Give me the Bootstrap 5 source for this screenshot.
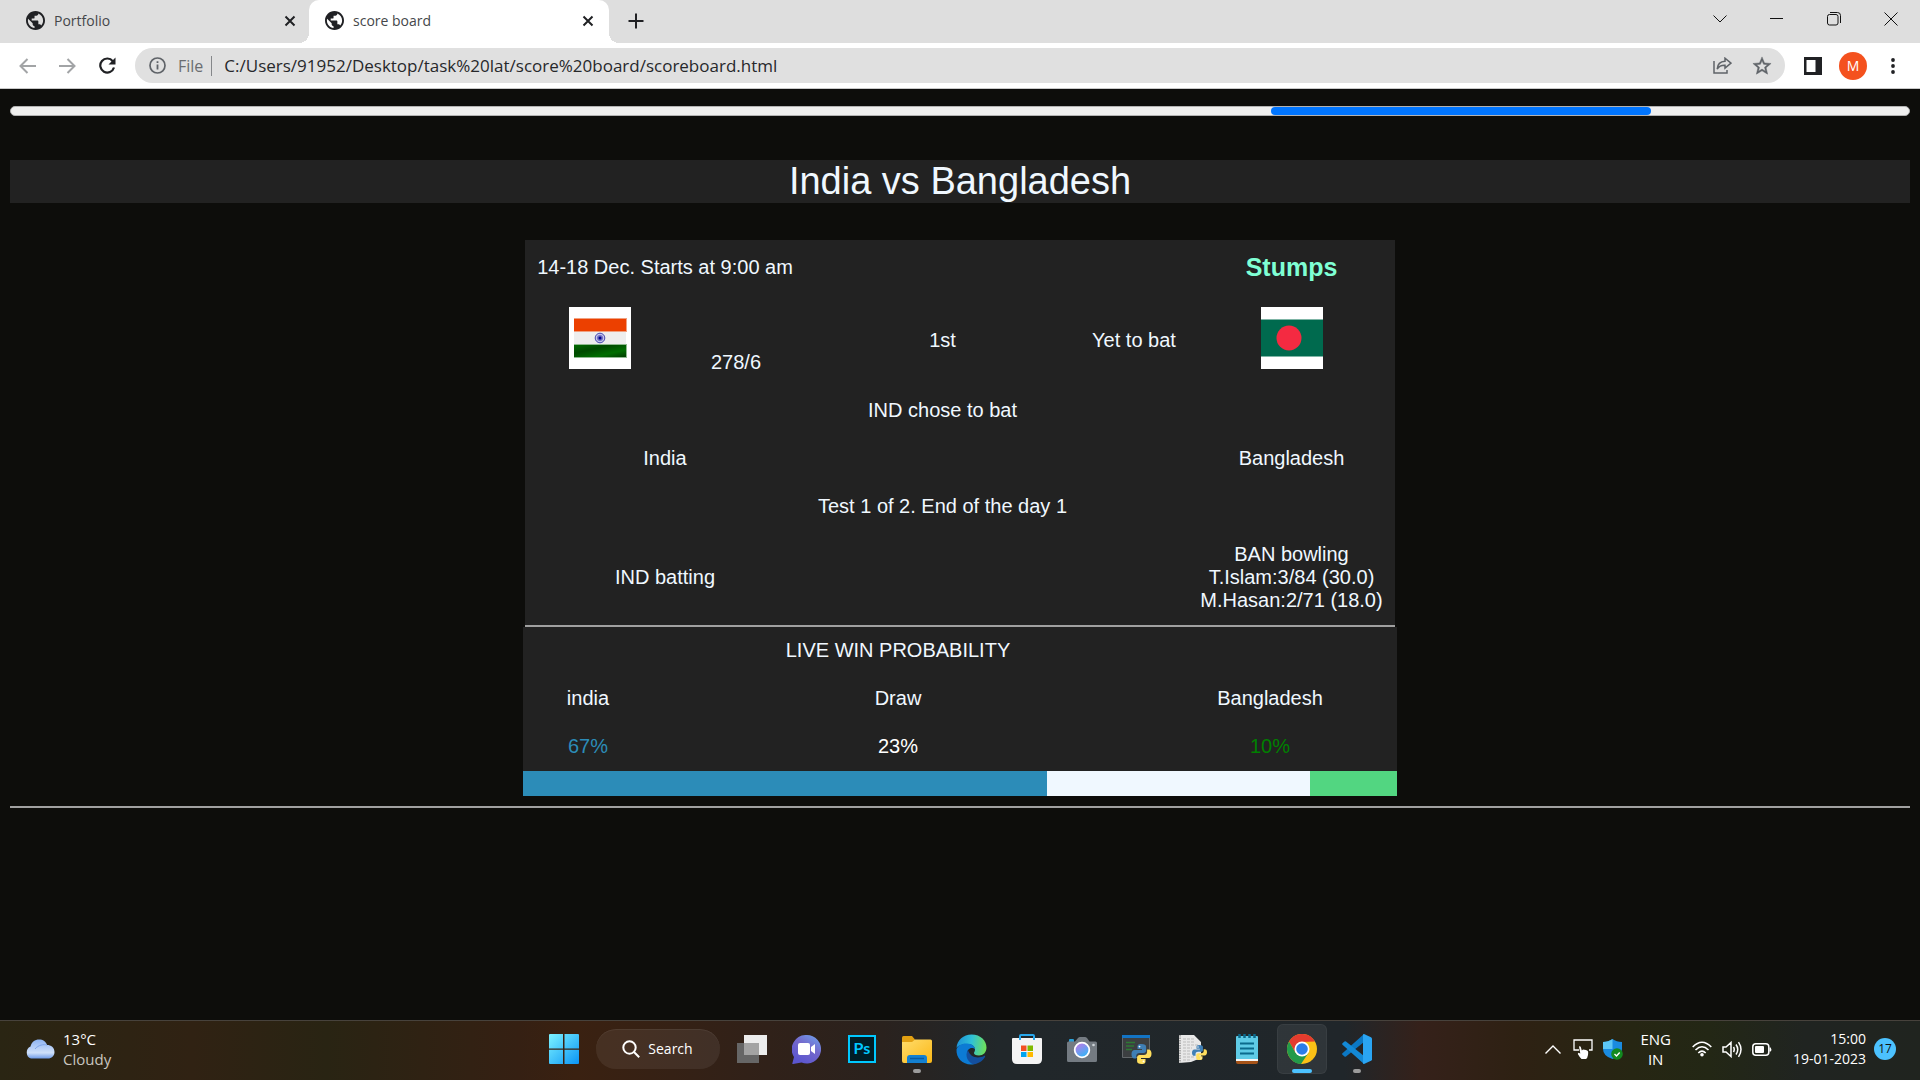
<!DOCTYPE html>
<html lang="en">
<head>
<meta charset="utf-8">
<meta name="viewport" content="width=device-width, initial-scale=1">
<title>score board</title>
<link href="https://cdn.jsdelivr.net/npm/bootstrap@5.3.0/dist/css/bootstrap.min.css" rel="stylesheet">
<style>
  body { background: #0d0d0b; font-family: "Open Sans", "Noto Sans", sans-serif; color: #202124; }
  svg { display: block; flex: none; }
  button { border: 0; background: none; padding: 0; color: inherit; }

  /* browser window */
  .tabstrip { background: #dedede; height: 43px; font-size: 14px; padding-right: 1px; }
  .tab-item { position: relative; height: 43px; padding: 0 11px 2px 26px; width: 300px; gap: 9px; }
  .tab-item a { color: #45474a; text-decoration: none; }
  .tab-first { width: 309px; padding-right: 9px; }
  .tab-live { background: #fff; border-radius: 10px 10px 0 0; padding-left: 16px; }
  .tab-live::before, .tab-live::after { content: ""; position: absolute; bottom: 0; width: 10px; height: 10px; }
  .tab-live::before { left: -10px; background: radial-gradient(circle at 0 0, transparent 10px, #fff 10px); }
  .tab-live::after { right: -10px; background: radial-gradient(circle at 100% 0, transparent 10px, #fff 10px); }
  .tab-btn { width: 20px; height: 20px; display: grid; place-items: center; }
  .win-btn { width: 57px; height: 38px; display: grid; place-items: center; color: #111; }
  .new-tab { margin: 11px 0 0 17px; }
  .toolbar { background: #fff; height: 46px; border-bottom: 1px solid #c9c9c9; padding: 0 7px; }
  .tool-btn { width: 40px; height: 36px; display: grid; place-items: center; }
  .omnibox { background: #e0e0e0; height: 35px; border-radius: 18px; margin: 0 8px; padding: 0 3px 0 14px; color: #6a6d70; font-size: 16px; }
  .omnibox input { border: 0; outline: 0; background: none; color: #27282b; padding: 0; min-width: 0; font-size: 17px; }
  .omni-line { width: 1px; height: 20px; background: #85878a; }
  .avatar { width: 28px; height: 28px; background: #f4511e; color: #fff; font-size: 14px; }

  /* score page */
  .scores { font-family: "Liberation Sans", Arial, sans-serif; font-size: 20px; line-height: 23px; color: aliceblue; padding: 17px 10px 0; }
  .load-track { height: 10px; border-radius: 5px; background: #efefef; border: 1px solid #b2b2b2; overflow: hidden; }
  .load-track .progress-bar { background: #0075ff; border-radius: 5px; margin-left: 66.4%; }
  .title-band { background: #222; font-size: 38px; line-height: 43px; margin: 44px 0 37px; color: aliceblue; font-weight: 400; }
  .score-table { background: #222; }
  .score-table td, .score-table th { padding: 12px 12px 13px; font-weight: 400; text-align: center; vertical-align: middle; }
  .score-table .stumps { color: aquamarine; font-size: 25px; line-height: 30px; font-weight: 700; }
  .score-table .runs { padding-right: 20px; padding-top: 56px; }
  .score-table .flag-cell { vertical-align: top; }
  .flag { width: 62px; height: 62px; margin: 0 auto; }
  .rule { height: 2px; background: #a0a0a0; border: 0; opacity: 1; margin: 0; }
  .score-rule { width: 870px; }
  .page-rule { margin-top: 10px; }
  .score-width { max-width: 874px; }
  .odds { background: #222; }
  .c-ind { color: #2c8cb8; }
  .c-ban { color: green; }
  .split-bar { height: 25px; border-radius: 0; background: none; }
  .b-ind { background: #2c8cb8; }
  .b-draw { background: aliceblue; }
  .b-ban { background: #52d681; }

  /* taskbar */
  .taskbar { height: 60px; padding-bottom: 3px; border-top: 1px solid #47423c; color: #fff; font-size: 15px; line-height: 20px;
    background: linear-gradient(90deg, #2a2513 0, #302213 10%, #292413 17%, #352013 27%, #3a2111 30%, #302119 40%, #2a221e 46%, #21272a 52%, #20262a 70%, #35211a 74%, #2e2113 79%, #262613 85%, #232715 89%, #202421 94%, #20241f 100%); }
  .app-row { gap: 5px; }
  .app-btn { width: 50px; height: 50px; display: grid; place-items: center; position: relative; border-radius: 6px; }
  .app-open { background: #ffffff12; box-shadow: inset 0 0 0 1px #ffffff0c; }
  .app-dot { position: absolute; bottom: 1px; left: 21px; width: 8px; height: 4px; border-radius: 2px; background: #9b9b9b; }
  .app-open .app-dot { left: 15px; width: 20px; background: #4cc2ff; }
  .find-pill { width: 124px; height: 40px; border-radius: 20px; background: #ffffff12; box-shadow: inset 0 1px 0 #ffffff10; margin: 0 2px; font-size: 14px; }
  .tray-btn { width: 30px; height: 40px; display: grid; place-items: center; }
  .clock { font-size: 14px; }
  .notice { width: 22px; height: 22px; background: #4cc2ff; color: #111; font-size: 12px; }
  .tray-tail { padding-right: 24px; }
  .soft { color: #c9c5bf; }
</style>
<script src="https://cdn.jsdelivr.net/npm/bootstrap@5.3.0/dist/js/bootstrap.bundle.min.js"></script>
</head>
<body class="d-flex flex-column min-vh-100">

<svg width="0" height="0" class="position-absolute" aria-hidden="true">
  <defs>
    <symbol id="globe" viewBox="2 2 20 20"><path fill="currentColor" d="M12 2C6.480 2 2 6.480 2 12s4.480 10 10 10 10-4.480 10-10S17.520 2 12 2zm-1 17.930c-3.950-.49-7-3.850-7-7.930 0-.62.08-1.210.21-1.790L9 15v1c0 1.100.9 2 2 2v1.930zm6.900-2.540c-.26-.81-1-1.390-1.900-1.390h-1v-3c0-.55-.45-1-1-1H8v-2h2c.55 0 1-.45 1-1V7h2c1.100 0 2-.9 2-2v-.41c2.930 1.190 5 4.060 5 7.410 0 2.080-.8 3.970-2.100 5.390z"/></symbol>
    <symbol id="cross" viewBox="0 0 12 12"><path d="M1.500 1.500l9 9M10.500 1.500l-9 9" stroke="currentColor" stroke-width="2" fill="none"/></symbol>
    <symbol id="python" viewBox="0 0 20 20">
      <path fill="#3f7fb5" d="M9.800 0C6.500 0 6 1.400 6 2.800V5h4.500v1H3.200C1 6 0 7.800 0 10.200 0 12.800 1 14.400 3 14.400h1.700v-2.500c0-1.800 1.500-3 3.200-3h4.300c1.400 0 2.400-1.100 2.400-2.400V2.800C14.600 1 13 0 9.800 0z"/>
      <circle cx="8" cy="2.600" r=".9" fill="#fff"/>
      <path fill="#ffdf5e" d="M10.200 20c3.300 0 3.800-1.400 3.800-2.800V15H9.500v-1h7.300c2.200 0 3.200-1.800 3.200-4.200 0-2.600-1-4.200-3-4.200h-1.400v2.500c0 1.800-1.500 3-3.200 3H8.100c-1.400 0-2.500 1.100-2.500 2.400v3.700C5.600 19 7 20 10.200 20z"/>
      <circle cx="12" cy="17.400" r=".9" fill="#fff"/>
    </symbol>
  </defs>
</svg>

<header>
  <nav class="tabstrip d-flex align-items-start" aria-label="Tabs">
    <div class="tab-item tab-first d-flex align-items-center">
      <svg width="19" height="19"><use href="#globe"/></svg>
      <a href="#" class="flex-grow-1">Portfolio</a>
      <button class="tab-btn" aria-label="Close Portfolio"><svg width="12" height="12"><use href="#cross"/></svg></button>
    </div>
    <div class="tab-item tab-live d-flex align-items-center">
      <svg width="19" height="19"><use href="#globe"/></svg>
      <a href="#" class="flex-grow-1">score board</a>
      <button class="tab-btn" aria-label="Close score board"><svg width="12" height="12"><use href="#cross"/></svg></button>
    </div>
    <button class="tab-btn new-tab" aria-label="New tab"><svg width="16" height="16" viewBox="0 0 16 16"><path d="M8 0.500v15M.5 8h15" stroke="#202124" stroke-width="2"/></svg></button>
    <div class="d-flex ms-auto">
      <button class="win-btn" aria-label="Search tabs"><svg width="14" height="8" viewBox="0 0 14 8" fill="none" stroke="currentColor"><path d="M.5.500 7 7 13.500.5"/></svg></button>
      <button class="win-btn" aria-label="Minimize"><svg width="13" height="2" viewBox="0 0 13 2"><path d="M0 .5h13" stroke="currentColor"/></svg></button>
      <button class="win-btn" aria-label="Restore"><svg width="14" height="14" viewBox="0 0 14 14" fill="none" stroke="currentColor"><rect x=".5" y="2.500" width="10.500" height="10.500" rx="2"/><path d="M3 .5h7.500a3 3 0 0 1 3 3V11"/></svg></button>
      <button class="win-btn" aria-label="Close"><svg width="14" height="14" viewBox="0 0 14 14"><path d="M.5.500l13 13M13.500.5l-13 13" stroke="currentColor"/></svg></button>
    </div>
  </nav>
  <div class="toolbar d-flex align-items-center">
    <button class="tool-btn" aria-label="Back"><svg width="17" height="16" viewBox="0 0 17 16" fill="none" stroke="#a2a4a6" stroke-width="2"><path d="M17 8H2M8.500 1L1.500 8l7 7"/></svg></button>
    <button class="tool-btn" aria-label="Forward"><svg width="17" height="16" viewBox="0 0 17 16" fill="none" stroke="#a2a4a6" stroke-width="2"><path d="M0 8h15M8.500 1l7 7-7 7"/></svg></button>
    <button class="tool-btn" aria-label="Reload"><svg width="18" height="17" viewBox="0 0 18 17"><path d="M14.800 4.200A7 7 0 1 0 16 10.500" fill="none" stroke="#202124" stroke-width="2.200"/><path d="M17.500.500v7h-7z" fill="#202124"/></svg></button>
    <div class="omnibox d-flex align-items-center flex-grow-1">
      <svg width="17" height="17" viewBox="0 0 17 17" fill="none" stroke="#5f6368"><circle cx="8.500" cy="8.500" r="7.500" stroke-width="1.700"/><path d="M8.500 7.500v5M8.500 4.200v1.900" stroke-width="1.800"/></svg>
      <label for="address" class="ms-2 ps-1">File</label>
      <span class="omni-line mx-2"></span>
      <input id="address" type="text" class="flex-grow-1 ms-1" value="C:/Users/91952/Desktop/task%20lat/score%20board/scoreboard.html">
      <button class="tool-btn" aria-label="Share"><svg width="19" height="17" viewBox="0 0 19 17" fill="none" stroke="#5f6368" stroke-width="1.500"><path d="M1 4v12h13v-3"/><path d="M4.200 12C4.500 7.500 7.500 4.500 12 4.300V1.200L18 6.200l-6 5V8.200C8.500 8 6 9.200 4.200 12z"/></svg></button>
      <button class="tool-btn" aria-label="Bookmark"><svg width="20" height="20" viewBox="1 1 22 22" fill="#5f6368"><path d="M22 9.240l-7.190-.62L12 2 9.190 8.630 2 9.240l5.460 4.730L5.820 21 12 17.270 18.180 21l-1.630-7.030L22 9.240zM12 15.400l-3.760 2.270 1-4.280-3.320-2.880 4.380-.38L12 6.100l1.710 4.040 4.380.38-3.320 2.880 1 4.280L12 15.400z" stroke="#5f6368" stroke-width=".5"/></svg></button>
    </div>
    <button class="tool-btn" aria-label="Side panel"><svg width="18" height="18" viewBox="0 0 18 18"><path fill="#202124" d="M0 0h18v18H0z"/><path fill="#fff" d="M2.500 3h9v12h-9z"/></svg></button>
    <button class="tool-btn" aria-label="Profile"><span class="avatar rounded-circle d-flex align-items-center justify-content-center">M</span></button>
    <button class="tool-btn" aria-label="Menu"><svg width="4" height="16" viewBox="0 0 4 16" fill="#202124"><circle cx="2" cy="2" r="1.900"/><circle cx="2" cy="8" r="1.900"/><circle cx="2" cy="14" r="1.900"/></svg></button>
  </div>
</header>

<main class="scores flex-grow-1">
  <div class="progress load-track" role="progressbar" aria-label="Loading"><div class="progress-bar" style="width:20%"></div></div>
  <h1 class="title-band text-center">India vs Bangladesh</h1>

  <table class="score-table mx-auto">
    <colgroup><col style="width:150px"><col style="width:130px"><col style="width:275px"><col style="width:108px"><col style="width:207px"></colgroup>
    <tr><td colspan="2" class="text-nowrap">14-18 Dec. Starts at 9:00 am</td><td></td><td></td><th class="stumps">Stumps</th></tr>
    <tr>
      <td class="flag-cell"><svg class="flag" viewBox="0 0 62 62" role="img" aria-label="Flag of India">
        <defs><linearGradient id="leaf" x1="0" y1="0" x2="1" y2="1"><stop offset="0" stop-color="#006a00"/><stop offset=".35" stop-color="#004a00"/><stop offset=".7" stop-color="#006e00"/><stop offset="1" stop-color="#003c00"/></linearGradient></defs>
        <path fill="#fff" d="M0 0h62v62H0z"/><path fill="#f0a080" d="M5 11h53v14H5z"/><path fill="#ec4000" d="M5 12h52v12H5z"/><path fill="#eee" d="M5 25h52v12H5z"/><path fill="#8fba8f" d="M5 37h53v14H5z"/><path fill="url(#leaf)" d="M5 38h52v12H5z"/>
        <circle cx="31" cy="31" r="4.800" fill="#c5c5ea" stroke="#4848b0"/><circle cx="31" cy="31" r="3" fill="#7070c4"/><circle cx="31" cy="31" r="1.500" fill="#000090"/></svg></td>
      <td class="runs">278/6</td><td>1st</td><td class="text-nowrap">Yet to bat</td>
      <td class="flag-cell"><svg class="flag" viewBox="0 0 62 62" role="img" aria-label="Flag of Bangladesh"><path fill="#fff" d="M0 0h62v62H0z"/><path fill="#7fb5a6" d="M0 12h62v38H0z"/><path fill="#006a4e" d="M0 13h62v36H0z"/><circle cx="28" cy="31" r="12.500" fill="#f42a41"/></svg></td>
    </tr>
    <tr><td colspan="2"></td><td>IND chose to bat</td><td></td><td></td></tr>
    <tr><td colspan="2">India</td><td></td><td></td><td>Bangladesh</td></tr>
    <tr><td colspan="2"></td><td class="text-nowrap">Test 1 of 2. End of the day 1</td><td></td><td></td></tr>
    <tr><td colspan="2">IND batting</td><td></td><td></td><td class="text-nowrap">BAN bowling<br>T.Islam:3/84 (30.0)<br>M.Hasan:2/71 (18.0)</td></tr>
  </table>
  <hr class="rule score-rule mx-auto">

  <section class="score-width mx-auto odds" aria-label="Live win probability">
    <table class="score-table">
      <colgroup><col style="width:130px"><col style="width:490px"><col style="width:254px"></colgroup>
      <tr><td></td><th>LIVE WIN PROBABILITY</th><td></td></tr>
      <tr><td>india</td><td>Draw</td><td>Bangladesh</td></tr>
      <tr><td class="c-ind">67%</td><td class="text-white">23%</td><td class="c-ban">10%</td></tr>
    </table>
    <div class="progress split-bar">
      <div class="progress-bar b-ind" style="width:60%"></div>
      <div class="progress-bar b-draw" style="width:30%"></div>
      <div class="progress-bar b-ban" style="width:10%"></div>
    </div>
  </section>
  <hr class="rule page-rule">
</main>

<footer class="taskbar d-flex align-items-center">
  <div class="d-flex align-items-center flex-fill w-25 ps-4">
    <svg width="31" height="20" viewBox="0 0 31 20"><defs><linearGradient id="sky" x1="0" y1="0" x2="0" y2="1"><stop offset="0" stop-color="#8fb4f2"/><stop offset=".7" stop-color="#cfe0fa"/><stop offset="1" stop-color="#6f9be8"/></linearGradient></defs><path fill="url(#sky)" d="M7 19.500a6.500 6.500 0 0 1-.5-12C7.500 3 11 .5 15 .5c4 0 7 2 8 5.500 4 0 7.500 2.500 7.500 7 0 4-3 6.500-6.500 6.500z"/><path d="M11 10c3-4 9-5 12-4" stroke="#7fa5ea" fill="none"/></svg>
    <div class="ms-2">13°C<br><span class="soft">Cloudy</span></div>
  </div>

  <nav class="app-row d-flex align-items-center" aria-label="Apps">
    <button class="app-btn" aria-label="Start"><svg width="30" height="30" viewBox="0 0 30 30"><defs><linearGradient id="win" x1="0" y1="0" x2="1" y2="1"><stop offset="0" stop-color="#7df3ff"/><stop offset="1" stop-color="#0a94f5"/></linearGradient></defs><path fill="url(#win)" d="M0 1q0-1 1-1h13v14.500H0zM15.500 0H29q1 0 1 1v13.500H15.500zM0 15.800h14V30H1q-1 0-1-1zM15.500 15.800H30V29q0 1-1 1H15.500z"/></svg></button>
    <button class="find-pill d-flex align-items-center justify-content-center gap-2"><svg width="18" height="18" viewBox="0 0 18 18" fill="none" stroke="#fff" stroke-width="2"><circle cx="7.500" cy="7.500" r="6.200"/><path d="M12 12l5.200 5.200"/></svg>Search</button>
    <button class="app-btn" aria-label="Task view"><svg width="30" height="28" viewBox="0 0 30 28"><path fill="#666" d="M0 8h22v20H0z"/><path fill="#ececec" d="M7 0h23v20H7z"/><path fill="#a3a3a3" d="M7 8h15v12H7z"/></svg></button>
    <button class="app-btn" aria-label="Chat"><svg width="29" height="29" viewBox="0 0 29 29"><defs><linearGradient id="chat" x1="1" y1="0" x2=".4" y2="1"><stop offset="0" stop-color="#6ea7ee"/><stop offset=".5" stop-color="#7468cc"/><stop offset="1" stop-color="#5b56cf"/></linearGradient></defs><path fill="url(#chat)" d="M14.500 0a14.300 14.300 0 1 1-5 27.600L1 29q-1 0-.5-1.200L2 22A14.300 14.300 0 0 1 14.500 0z"/><rect x="6" y="8" width="12" height="12" rx="2" fill="#fff"/><path fill="#fff" d="M19 12l4-3v10l-4-3z"/></svg></button>
    <button class="app-btn" aria-label="Photoshop"><svg width="28" height="28" viewBox="0 0 28 28"><path fill="#001d26" stroke="#00c8ff" stroke-width="2" d="M1 1h26v26H1z"/><text x="14" y="19" text-anchor="middle" font-family="Lato, sans-serif" font-weight="700" font-size="16" fill="#00c8ff">Ps</text></svg></button>
    <button class="app-btn" aria-label="File Explorer"><svg width="30" height="27" viewBox="0 0 30 27"><defs><linearGradient id="fold" x1="0" y1="0" x2="1" y2="1"><stop offset="0" stop-color="#ffdc6b"/><stop offset="1" stop-color="#fbb817"/></linearGradient></defs><path fill="#e2a012" d="M0 1.500Q0 0 1.500 0h8.500l3 3.500V9H0z"/><path fill="url(#fold)" d="M0 6h10l3-2.500h15.500q1.500 0 1.500 1.500v20q0 2-2 2H2q-2 0-2-2z"/><path fill="#1480d0" d="M5 27v-5q0-3 3-3h14q3 0 3 3v5z"/><path d="M8 22.500h14" stroke="#0a5aa0" stroke-width="1.500"/></svg><span class="app-dot"></span></button>
    <button class="app-btn" aria-label="Edge"><svg width="31" height="31" viewBox="0 0 31 31"><defs><linearGradient id="edg" x1="0" y1=".3" x2="1" y2=".4"><stop offset="0" stop-color="#1b90d8"/><stop offset=".5" stop-color="#2fc0d6"/><stop offset="1" stop-color="#6fe05a"/></linearGradient></defs><path fill="url(#edg)" d="M.5 14C1 6 7.500.500 15.500.500 25 .5 30.500 7 30.500 13.500c0 5-3.500 8-7.500 8-3.500 0-5-1.300-5-2.500 0-1 1-1.300 1-3.500 0-3-3-5.500-7-5.500C6 10 1.500 12 .5 14z"/><path fill="#0c7bd4" d="M.5 15.500C1.500 11.500 6 9.200 11 9.500c4.500.2 8 2.500 8 6-.5-2-5-2.500-7 .5-3 5 1 12 8 13-1.500 1-3 1.500-5 1.500C6.500 30.500 0 24 .5 15.500z"/><path fill="#134f9e" d="M12 16c-4 5.500.5 13.500 6 14.300 5-.8 9-3.800 11-7.300.5-1-.3-1.400-1-1-6 3-14 1.500-16-6z"/></svg></button>
    <button class="app-btn" aria-label="Microsoft Store"><svg width="30" height="30" viewBox="0 0 30 30"><path fill="#f4f4f4" d="M0 5q0-1 1-1h28q1 0 1 1v20q0 5-5 5H5q-5 0-5-5z"/><path d="M8 6V2q0-1 1-1h12q1 0 1 1v4" fill="none" stroke="#29a8ec" stroke-width="2"/><path fill="#f25022" d="M9 11.500h5.500V17H9z"/><path fill="#7fba00" d="M15.500 11.500H21V17h-5.500z"/><path fill="#00a4ef" d="M9 18h5.500v5H9z"/><path fill="#ffb900" d="M15.500 18H21v5h-5.500z"/></svg></button>
    <button class="app-btn" aria-label="Camera"><svg width="30" height="25" viewBox="0 0 30 25"><defs><linearGradient id="lens" x1="0" y1="0" x2=".6" y2="1"><stop offset="0" stop-color="#cf72e6"/><stop offset="1" stop-color="#35b4f5"/></linearGradient></defs><path fill="#29a0d8" d="M2 5V3q0-1 1-1h3q1 0 1 1v2z"/><path fill="#747b82" d="M0 6q0-1.500 1.500-1.500H8L11 1q1-1 2-1h5q1 0 2 1l2.500 3.500h6Q30 4.500 30 6v17.500q0 1.500-1.500 1.500h-27Q0 25 0 23.500z"/><circle cx="15" cy="13" r="7.300" fill="url(#lens)" stroke="#fff" stroke-width="1.800"/><circle cx="26.500" cy="8" r="1.300" fill="#cdd3d8"/></svg></button>
    <button class="app-btn" aria-label="Python console"><svg width="30" height="30" viewBox="0 0 30 30"><path fill="#3c3f41" stroke="#62676a" d="M.5 2.500h27v21H.5z"/><path fill="#1374c4" d="M0 1h28v3H0z"/><path d="M4 8.500h9M4 12h8M4 15.500h6" stroke="#2d7a34" stroke-width="1.500"/><svg x="9" y="10" width="21" height="20"><use href="#python"/></svg></svg></button>
    <button class="app-btn" aria-label="Python file"><svg width="30" height="30" viewBox="0 0 30 30"><path fill="#e8e8e8" d="M2 1h15l7 7v17l-5 1-5 2-12 1z"/><path d="M3 1v28" stroke="#aaa" stroke-width="2" stroke-dasharray="1.500 1"/><path d="M6 5h11M6 8h12M6 11h15M6 14h9M6 17h8M6 20h8M6 23h11M6 26h8" stroke="#bbb" stroke-dasharray="3 1"/><svg x="15" y="11" width="15" height="15"><use href="#python"/></svg></svg></button>
    <button class="app-btn" aria-label="Notepad"><svg width="22" height="30" viewBox="0 0 22 30"><path fill="#a65318" d="M0 26h22v2q0 2-2 2H2q-2 0-2-2z"/><path fill="#f6f6f6" d="M0 24h22v3H0z"/><path fill="#5fcbe6" d="M0 3q0-1 1-1h20q1 0 1 1v22H0z"/><path d="M4 9.500h14M4 14.500h14M4 19.500h14" stroke="#0b6a8c" stroke-width="2"/><path d="M3.500 0v4M8.500 0v4M13.500 0v4M18.500 0v4" stroke="#0b6a8c" stroke-width="2.500"/></svg></button>
    <button class="app-btn app-open" aria-label="Chrome"><svg width="30" height="30" viewBox="0 0 30 30"><circle cx="15" cy="15" r="15" fill="#fbc116"/><path fill="#e33b2e" d="M2 7.500A15 15 0 0 1 28 7.500L15 8 8.500 18.700z"/><path fill="#229a4a" d="M2 7.500A15 15 0 0 0 14 30l7.500-11.200L15 22l-6.500-3.300z"/><circle cx="15" cy="15" r="7.500" fill="#fff"/><circle cx="15" cy="15" r="5.800" fill="#2b7de9"/></svg><span class="app-dot"></span></button>
    <button class="app-btn" aria-label="Visual Studio Code"><svg width="30" height="30" viewBox="0 0 30 30"><path fill="#0b78c4" d="M22 0v8L4 22.500q-.8.600-1.500 0L.5 20.700q-.8-.8 0-1.500z"/><path fill="#1389d6" d="M22 30v-8L4 7.500q-.8-.6-1.500 0L.5 9.300q-.8.800 0 1.500z"/><path fill="#2aa5f3" d="M22 0l7 3.200q1 .5 1 1.600v20.400q0 1.100-1 1.600L22 30q-1 0-1-1V1q0-1 1-1z"/></svg><span class="app-dot"></span></button>
  </nav>

  <div class="d-flex align-items-center justify-content-end flex-fill w-25 tray-tail">
    <button class="tray-btn" aria-label="Hidden icons"><svg width="16" height="9" viewBox="0 0 16 9" fill="none" stroke="#fff" stroke-width="1.400"><path d="M.5 8.500 8 1l7.500 7.500"/></svg></button>
    <button class="tray-btn" aria-label="Touch pad"><svg width="20" height="20" viewBox="0 0 20 20"><path d="M6 11H1V1h18v10h-3" fill="none" stroke="#fff" stroke-width="1.300"/><path fill="#fff" d="M6 7.500q1.300-.7 1.800.5l1 3.500 1.200-1 1.500.3 1.500.2 1.500.8q1 .3.500 4.200-.5 3-2 4H8.500Q6.500 18 4.800 15l.5-1.200 2 .6z"/></svg></button>
    <button class="tray-btn" aria-label="Security"><svg width="20" height="21" viewBox="0 0 20 21"><path fill="#1a8be0" d="M9.500 0q4 3 9.500 3v7q0 7-9.500 10Q0 17 0 10V3q5.500 0 9.500-3z"/><path fill="#5cc6f5" d="M9.500 0v10H0V3q5.500 0 9.500-3z"/><circle cx="14" cy="15" r="5.800" fill="#128a1f"/><path d="M11.500 15l2 2 3.200-3.500" stroke="#fff" stroke-width="1.400" fill="none"/></svg></button>
    <button class="text-center px-2 mx-1">ENG<br>IN</button>
    <button class="tray-btn ms-1" aria-label="Wi-Fi"><svg width="20" height="16" viewBox="0 0 20 16" fill="none" stroke="#fff" stroke-width="1.600"><path d="M.7 6q9.300-9.500 18.600 0M3.500 9q6.500-6.500 13 0M6.300 12q3.700-3.700 7.400 0"/><circle cx="10" cy="13.800" r="1.800" fill="#fff" stroke="none"/></svg></button>
    <button class="tray-btn" aria-label="Volume"><svg width="20" height="17" viewBox="0 0 20 17" fill="none" stroke="#fff" stroke-width="1.500"><path d="M1 6v5h3l5 4.500v-14L4 6zM11.500 6q1.500 2.500 0 5M14 3.500q3.500 5 0 10M16.500 1.200q5 7.300 0 14.600"/></svg></button>
    <button class="tray-btn" aria-label="Battery"><svg width="20" height="13" viewBox="0 0 20 13"><rect x=".8" y=".8" width="16" height="11.400" rx="3" fill="none" stroke="#fff" stroke-width="1.500"/><rect x="3" y="3" width="9" height="7" rx="1" fill="#fff"/><path fill="#fff" d="M17.500 4.500h1.200q1.300 2 0 4h-1.200z"/></svg></button>
    <button class="clock text-end text-nowrap ms-3 me-2">15:00<br>19-01-2023</button>
    <button class="notice rounded-circle" aria-label="17 notifications">17</button>
  </div>
</footer>
</body>
</html>
